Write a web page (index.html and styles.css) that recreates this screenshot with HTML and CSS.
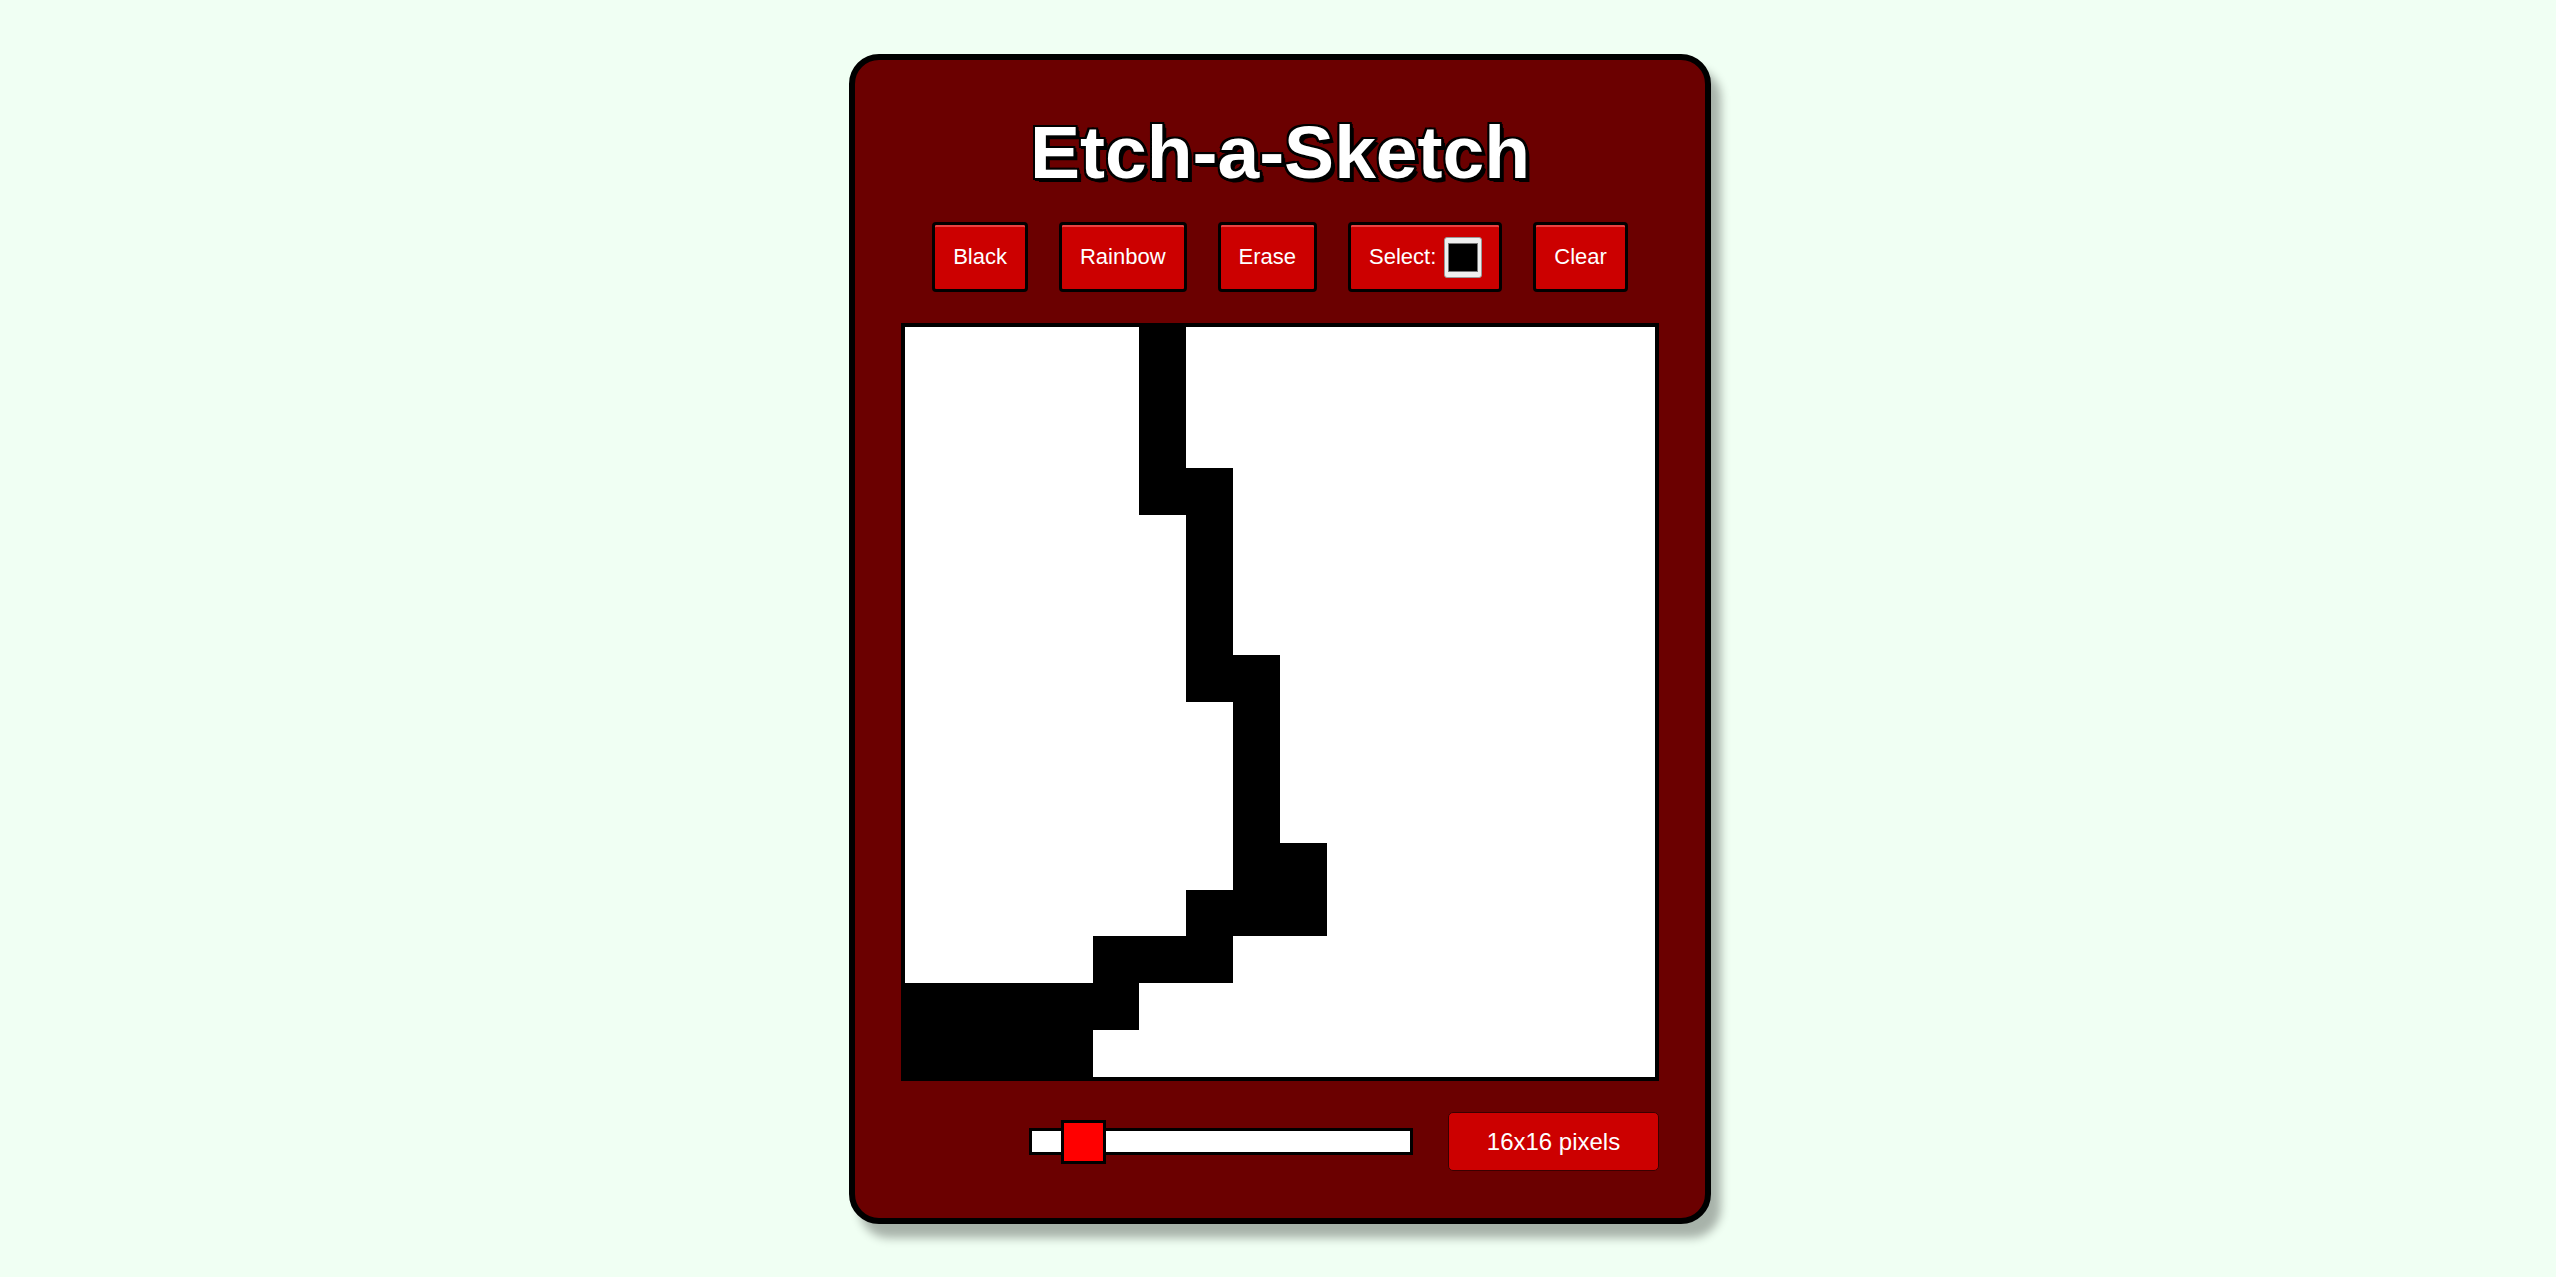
FILE: index.html
```html
<!DOCTYPE html>
<html lang="en">
<head>
<meta charset="utf-8">
<title>Etch-a-Sketch</title>
<link rel="stylesheet" href="styles.css">
</head>
<body>
<main class="card">
  <h1 class="title">Etch-a-Sketch</h1>
  <div class="controls">
    <button class="btn">Black</button>
    <button class="btn">Rainbow</button>
    <button class="btn">Erase</button>
    <button class="btn btn-select">Select:<span class="swatch"><span class="swatch-fill"></span></span></button>
    <button class="btn">Clear</button>
  </div>
  <div class="grid">
    <div class="px"></div><div class="px"></div><div class="px"></div><div class="px"></div><div class="px"></div><div class="px ink"></div><div class="px"></div><div class="px"></div><div class="px"></div><div class="px"></div><div class="px"></div><div class="px"></div><div class="px"></div><div class="px"></div><div class="px"></div><div class="px"></div>
    <div class="px"></div><div class="px"></div><div class="px"></div><div class="px"></div><div class="px"></div><div class="px ink"></div><div class="px"></div><div class="px"></div><div class="px"></div><div class="px"></div><div class="px"></div><div class="px"></div><div class="px"></div><div class="px"></div><div class="px"></div><div class="px"></div>
    <div class="px"></div><div class="px"></div><div class="px"></div><div class="px"></div><div class="px"></div><div class="px ink"></div><div class="px"></div><div class="px"></div><div class="px"></div><div class="px"></div><div class="px"></div><div class="px"></div><div class="px"></div><div class="px"></div><div class="px"></div><div class="px"></div>
    <div class="px"></div><div class="px"></div><div class="px"></div><div class="px"></div><div class="px"></div><div class="px ink"></div><div class="px ink"></div><div class="px"></div><div class="px"></div><div class="px"></div><div class="px"></div><div class="px"></div><div class="px"></div><div class="px"></div><div class="px"></div><div class="px"></div>
    <div class="px"></div><div class="px"></div><div class="px"></div><div class="px"></div><div class="px"></div><div class="px"></div><div class="px ink"></div><div class="px"></div><div class="px"></div><div class="px"></div><div class="px"></div><div class="px"></div><div class="px"></div><div class="px"></div><div class="px"></div><div class="px"></div>
    <div class="px"></div><div class="px"></div><div class="px"></div><div class="px"></div><div class="px"></div><div class="px"></div><div class="px ink"></div><div class="px"></div><div class="px"></div><div class="px"></div><div class="px"></div><div class="px"></div><div class="px"></div><div class="px"></div><div class="px"></div><div class="px"></div>
    <div class="px"></div><div class="px"></div><div class="px"></div><div class="px"></div><div class="px"></div><div class="px"></div><div class="px ink"></div><div class="px"></div><div class="px"></div><div class="px"></div><div class="px"></div><div class="px"></div><div class="px"></div><div class="px"></div><div class="px"></div><div class="px"></div>
    <div class="px"></div><div class="px"></div><div class="px"></div><div class="px"></div><div class="px"></div><div class="px"></div><div class="px ink"></div><div class="px ink"></div><div class="px"></div><div class="px"></div><div class="px"></div><div class="px"></div><div class="px"></div><div class="px"></div><div class="px"></div><div class="px"></div>
    <div class="px"></div><div class="px"></div><div class="px"></div><div class="px"></div><div class="px"></div><div class="px"></div><div class="px"></div><div class="px ink"></div><div class="px"></div><div class="px"></div><div class="px"></div><div class="px"></div><div class="px"></div><div class="px"></div><div class="px"></div><div class="px"></div>
    <div class="px"></div><div class="px"></div><div class="px"></div><div class="px"></div><div class="px"></div><div class="px"></div><div class="px"></div><div class="px ink"></div><div class="px"></div><div class="px"></div><div class="px"></div><div class="px"></div><div class="px"></div><div class="px"></div><div class="px"></div><div class="px"></div>
    <div class="px"></div><div class="px"></div><div class="px"></div><div class="px"></div><div class="px"></div><div class="px"></div><div class="px"></div><div class="px ink"></div><div class="px"></div><div class="px"></div><div class="px"></div><div class="px"></div><div class="px"></div><div class="px"></div><div class="px"></div><div class="px"></div>
    <div class="px"></div><div class="px"></div><div class="px"></div><div class="px"></div><div class="px"></div><div class="px"></div><div class="px"></div><div class="px ink"></div><div class="px ink"></div><div class="px"></div><div class="px"></div><div class="px"></div><div class="px"></div><div class="px"></div><div class="px"></div><div class="px"></div>
    <div class="px"></div><div class="px"></div><div class="px"></div><div class="px"></div><div class="px"></div><div class="px"></div><div class="px ink"></div><div class="px ink"></div><div class="px ink"></div><div class="px"></div><div class="px"></div><div class="px"></div><div class="px"></div><div class="px"></div><div class="px"></div><div class="px"></div>
    <div class="px"></div><div class="px"></div><div class="px"></div><div class="px"></div><div class="px ink"></div><div class="px ink"></div><div class="px ink"></div><div class="px"></div><div class="px"></div><div class="px"></div><div class="px"></div><div class="px"></div><div class="px"></div><div class="px"></div><div class="px"></div><div class="px"></div>
    <div class="px ink"></div><div class="px ink"></div><div class="px ink"></div><div class="px ink"></div><div class="px ink"></div><div class="px"></div><div class="px"></div><div class="px"></div><div class="px"></div><div class="px"></div><div class="px"></div><div class="px"></div><div class="px"></div><div class="px"></div><div class="px"></div><div class="px"></div>
    <div class="px ink"></div><div class="px ink"></div><div class="px ink"></div><div class="px ink"></div><div class="px"></div><div class="px"></div><div class="px"></div><div class="px"></div><div class="px"></div><div class="px"></div><div class="px"></div><div class="px"></div><div class="px"></div><div class="px"></div><div class="px"></div><div class="px"></div>
  </div>
  <div class="size-row">
    <div class="slider"><span class="thumb"></span></div>
    <div class="size-label">16x16 pixels</div>
  </div>
</main>
</body>
</html>
```
FILE: styles.css
```css
* { box-sizing: border-box; }

html, body {
  margin: 0;
  padding: 0;
}

body {
  background: #f0fff3;
  font-family: "Liberation Sans", Arial, sans-serif;
  display: flex;
  justify-content: center;
  padding-top: 54px;
  padding-bottom: 40px;
  padding-left: 4px;
}

.card {
  width: 862px;
  background: #6b0000;
  border: 6px solid #000;
  border-radius: 30px;
  box-shadow: 10px 14px 10px rgba(0, 0, 0, 0.3);
  padding: 49px 46px 47px;
  display: flex;
  flex-direction: column;
  align-items: center;
}

.title {
  margin: 0;
  font-size: 75px;
  line-height: 86px;
  font-weight: bold;
  color: #fff;
  -webkit-text-stroke: 3px #000;
  paint-order: stroke fill;
  text-shadow:
    3px 3px 0 #000,
    -2px -2px 0 #000,
    2px -2px 0 #000,
    -2px 2px 0 #000,
    0 3px 0 #000,
    3px 0 0 #000,
    4px 4px 0 #000;
}

.controls {
  margin-top: 27px;
  display: flex;
  gap: 31px;
}

.btn {
  height: 70px;
  padding: 0 18px;
  background: #cc0000;
  border: 3px solid #000;
  border-radius: 4px;
  box-shadow: inset 0 2px 0 rgba(255, 120, 120, 0.55);
  color: #fff;
  font-family: "Liberation Sans", Arial, sans-serif;
  font-size: 22px;
  display: flex;
  align-items: center;
}

.btn-select {
  padding-right: 17px;
}

.swatch {
  margin-left: 8px;
  width: 38px;
  height: 41px;
  background: #efefef;
  border: 1px solid #9a9a9a;
  border-radius: 3px;
  padding: 5px 3px;
  display: flex;
}

.swatch-fill {
  flex: 1;
  background: #000;
  border: 1px solid #777;
}

.grid {
  margin-top: 31px;
  width: 758px;
  height: 758px;
  border: 4px solid #000;
  background: #fff;
  display: grid;
  grid-template-columns: repeat(16, 1fr);
  grid-template-rows: repeat(16, 1fr);
}

.px { background: #fff; }
.px.ink { background: #000; }

.size-row {
  margin-top: 31px;
  width: 758px;
  display: flex;
  justify-content: flex-end;
  align-items: center;
  gap: 35px;
}

.slider {
  position: relative;
  width: 384px;
  height: 27px;
  background: #fff;
  border: 3px solid #000;
}

.thumb {
  position: absolute;
  left: 29px;
  top: -11px;
  width: 45px;
  height: 44px;
  background: #ff0000;
  border: 3px solid #000;
}

.size-label {
  width: 211px;
  height: 59px;
  background: #cc0000;
  border: 1px solid #3a0000;
  border-radius: 5px;
  color: #fff;
  font-size: 24px;
  display: flex;
  align-items: center;
  justify-content: center;
}
```
